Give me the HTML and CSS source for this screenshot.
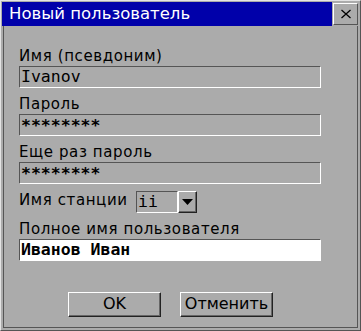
FILE: index.html
```html
<!DOCTYPE html>
<html lang="ru">
<head>
    <meta charset="UTF-8">
    <title>Новый пользователь</title>
    <link rel="stylesheet" href="styles.css">
</head>
<body>
    <div class="window">
        <div class="titlebar">
            <div class="title">Новый пользователь</div>
            <div class="close-btn">
                <svg width="12" height="10" viewBox="0 0 12 10">
                    <path d="M1.5 1 L10.5 9 M10.5 1 L1.5 9" stroke="#000" stroke-width="1.3" fill="none"/>
                </svg>
            </div>
        </div>

        <div class="dialog">
            <div class="field">
                <div class="label">Имя (псевдоним)</div>
                <div class="input">Ivanov</div>
            </div>
            <div class="field">
                <div class="label">Пароль</div>
                <div class="input input-secret">********</div>
            </div>
            <div class="field">
                <div class="label">Еще раз пароль</div>
                <div class="input input-secret">********</div>
            </div>

            <div class="station">
                <div class="label station-label">Имя станции</div>
                <div class="combo">
                    <div class="combo-value">ii</div>
                    <div class="combo-btn">
                        <svg width="11" height="6" viewBox="0 0 11 6">
                            <path d="M0 0 L11 0 L5.5 6 Z" fill="#000"/>
                        </svg>
                    </div>
                </div>
            </div>

            <div class="field">
                <div class="label">Полное имя пользователя</div>
                <div class="input input-white">Иванов Иван</div>
            </div>

            <div class="buttons">
                <div class="btn">OK</div>
                <div class="btn">Отменить</div>
            </div>
        </div>
    </div>
</body>
</html>
```

FILE: styles.css
```css
* {
    margin: 0;
    padding: 0;
    box-sizing: border-box;
}

body {
    background: #ababab;
    font-family: 'DejaVu Sans', 'Liberation Sans', sans-serif;
    color: #000;
}

.window {
    width: 361px;
    height: 331px;
    background: #ababab;
    border: 1px solid;
    border-color: #e4e4e4 #555555 #555555 #e4e4e4;
    padding: 1px 1px 2px 1px;
    display: flex;
    flex-direction: column;
}

.titlebar {
    height: 24px;
    display: flex;
}

.title {
    flex: 1;
    background: #0000aa;
    color: #fff;
    font-size: 16.5px;
    line-height: 24px;
    padding-left: 7px;
}

.close-btn {
    width: 25px;
    height: 22px;
    margin: 1px;
    border: 1px solid;
    border-color: #fff #555555 #555555 #fff;
    display: flex;
    justify-content: center;
    align-items: center;
}

.dialog {
    flex: 1;
    margin: 0 1px;
    border: 1px solid #555555;
    border-top: none;
    padding: 21px 0 0 15px;
}

.label {
    font-size: 15px;
    line-height: 18px;
    letter-spacing: 0.6px;
    margin-bottom: 1px;
}

.field {
    margin-bottom: 7px;
}

.input {
    width: 302px;
    height: 22px;
    border: 1px solid;
    border-color: #555555 #fff #fff #555555;
    font-family: 'DejaVu Sans Mono', 'Liberation Mono', monospace;
    font-size: 16.5px;
    line-height: 20px;
    padding-left: 1px;
}

.input-secret {
    font-weight: bold;
    line-height: 22px;
}

.input-white {
    background: #fff;
    font-weight: bold;
}

.station {
    display: flex;
    align-items: flex-start;
    margin-top: 1px;
    margin-bottom: 7px;
}

.station-label {
    width: 117px;
}

.combo {
    display: flex;
    height: 22px;
}

.combo-value {
    width: 42px;
    border: 1px solid;
    border-color: #555555 #fff #fff #555555;
    font-family: 'DejaVu Sans Mono', 'Liberation Mono', monospace;
    font-size: 16.5px;
    line-height: 20px;
    padding-left: 1px;
}

.combo-btn {
    width: 19px;
    height: 22px;
    border: 1px solid;
    border-color: #fff #222 #222 #fff;
    box-shadow: inset -1px -1px 0 #666;
    display: flex;
    justify-content: center;
    align-items: center;
}

.buttons {
    display: flex;
    gap: 19px;
    margin-top: 31px;
    padding-left: 49px;
}

.btn {
    width: 93px;
    height: 25px;
    border: 1px solid;
    border-color: #fff #222 #222 #fff;
    box-shadow: inset -1px -1px 0 #666;
    font-size: 16px;
    line-height: 22px;
    text-align: center;
}
```
